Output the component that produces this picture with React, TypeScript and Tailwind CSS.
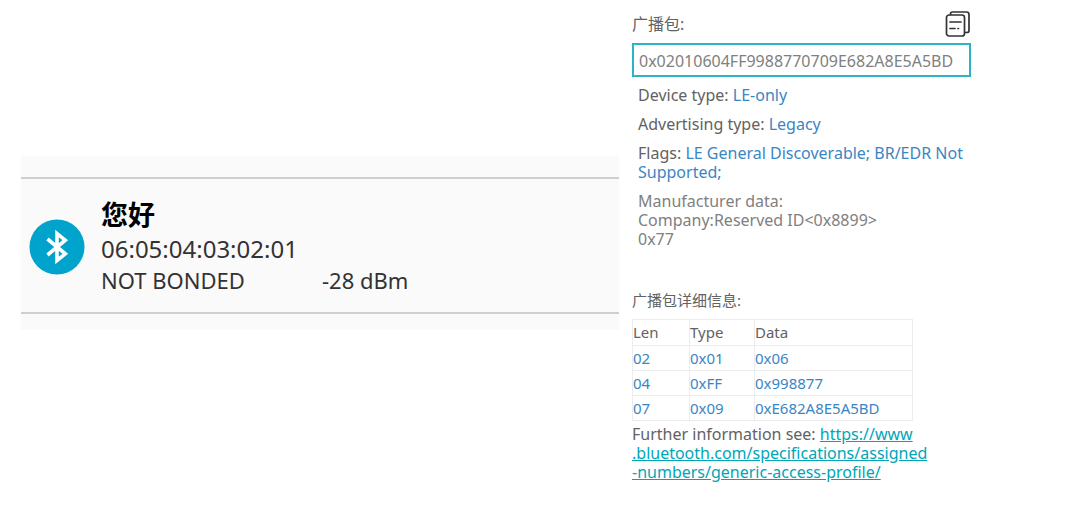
import type { ReactNode } from 'react'

const packets = [
  { len: '02', type: '0x01', data: '0x06' },
  { len: '04', type: '0xFF', data: '0x998877' },
  { len: '07', type: '0x09', data: '0xE682A8E5A5BD' },
]

const BluetoothIcon = () => (
  <svg viewBox="0 0 56 56" className="h-14 w-14 shrink-0" aria-hidden="true">
    <circle cx="28" cy="28" r="27.5" fill="#00a3cb" />
    <path
      d="M18.5 20 L36.3 34.8 L28 41.5 V14.5 L36.3 21.2 L18.5 36"
      fill="none"
      stroke="#fff"
      strokeWidth="3.6"
    />
  </svg>
)

const CopyIcon = () => (
  <svg viewBox="0 0 26 28" className="h-7 w-[26px]" fill="none" stroke="#333" strokeWidth="1.7" strokeLinecap="round" strokeLinejoin="round">
    <rect x="1.5" y="5" width="18" height="21" rx="2.5" />
    <path d="M5.5 4.5 V4 a2 2 0 0 1 2-2 H21.5 a2.5 2.5 0 0 1 2.5 2.5 V20.5 a2 2 0 0 1-2 2 H20" />
    <path d="M5 12 H16 M5 18.5 H10 M13 18.5 H13.5" />
  </svg>
)

const Field = ({ label, children }: { label: string; children: ReactNode }) => (
  <p>
    {label}: <span className="text-[#3a86c4]">{children}</span>
  </p>
)

export default function App() {
  return (
    <div className="flex bg-white pl-[21px] pr-[113px] font-['Noto_Sans','Noto_Sans_CJK_SC',sans-serif]">
      {/* Scan result */}
      <div className="mt-[156px] flex-1 self-start bg-[#fafafa] pb-4 pt-[21px]">
        <div className="flex items-center gap-4 border-y-2 border-[#cfcfcf] px-2 pb-4 pt-[18px] text-[#333]">
          <BluetoothIcon />
          <div>
            <h1 className="text-[27px] font-bold leading-9 text-black">您好</h1>
            <p className="text-2xl">06:05:04:03:02:01</p>
            <div className="flex text-[22px] leading-[31px]">
              <span className="w-[221px]">NOT BONDED</span>
              <span>-28 dBm</span>
            </div>
          </div>
        </div>
      </div>

      {/* Advertising packet */}
      <div className="ml-[13px] w-[339px] shrink-0 pt-2.5 text-base leading-[19px] text-[#626262]">
        <div className="flex items-center justify-between">
          <label htmlFor="packet">广播包:</label>
          <button type="button" aria-label="Copy">
            <CopyIcon />
          </button>
        </div>
        <input
          id="packet"
          readOnly
          value="0x02010604FF9988770709E682A8E5A5BD"
          className="mt-[5px] h-[34px] w-full border-2 border-[#2cb3c5] px-[5px] pt-0.5 text-[#808080] outline-none"
        />
        <div className="mt-[9px] space-y-2.5 pl-1.5">
          <Field label="Device type">LE-only</Field>
          <Field label="Advertising type">Legacy</Field>
          <Field label="Flags">LE General Discoverable; BR/EDR Not Supported;</Field>
          <p className="text-[#808080]">
            Manufacturer data:
            <br />
            Company:Reserved ID&lt;0x8899&gt;
            <br />
            0x77
          </p>
        </div>

        <h2 className="mt-[42px] text-[15px]">广播包详细信息:</h2>
        <table className="mt-[9px] w-[281px] table-fixed border-collapse text-left text-[15px]">
          <thead>
            <tr className="h-[26px]">
              <th className="w-[57px] border border-[#ececec] p-0 font-normal">Len</th>
              <th className="w-[65px] border border-[#ececec] p-0 font-normal">Type</th>
              <th className="border border-[#ececec] p-0 font-normal">Data</th>
            </tr>
          </thead>
          <tbody className="text-[#3a86c4]">
            {packets.map((p) => (
              <tr key={p.type} className="h-[25px]">
                <td className="border border-[#ececec] p-0">{p.len}</td>
                <td className="border border-[#ececec] p-0">{p.type}</td>
                <td className="border border-[#ececec] p-0">{p.data}</td>
              </tr>
            ))}
          </tbody>
        </table>
        <p className="mt-1">
          Further information see:{' '}
          <a href="https://www.bluetooth.com/specifications/assigned-numbers/generic-access-profile/" className="text-[#00a5b8] underline">
            https://www
            <br />
            .bluetooth.com/specifications/assigned
            <br />
            -numbers/generic-access-profile/
          </a>
        </p>
      </div>
    </div>
  )
}
